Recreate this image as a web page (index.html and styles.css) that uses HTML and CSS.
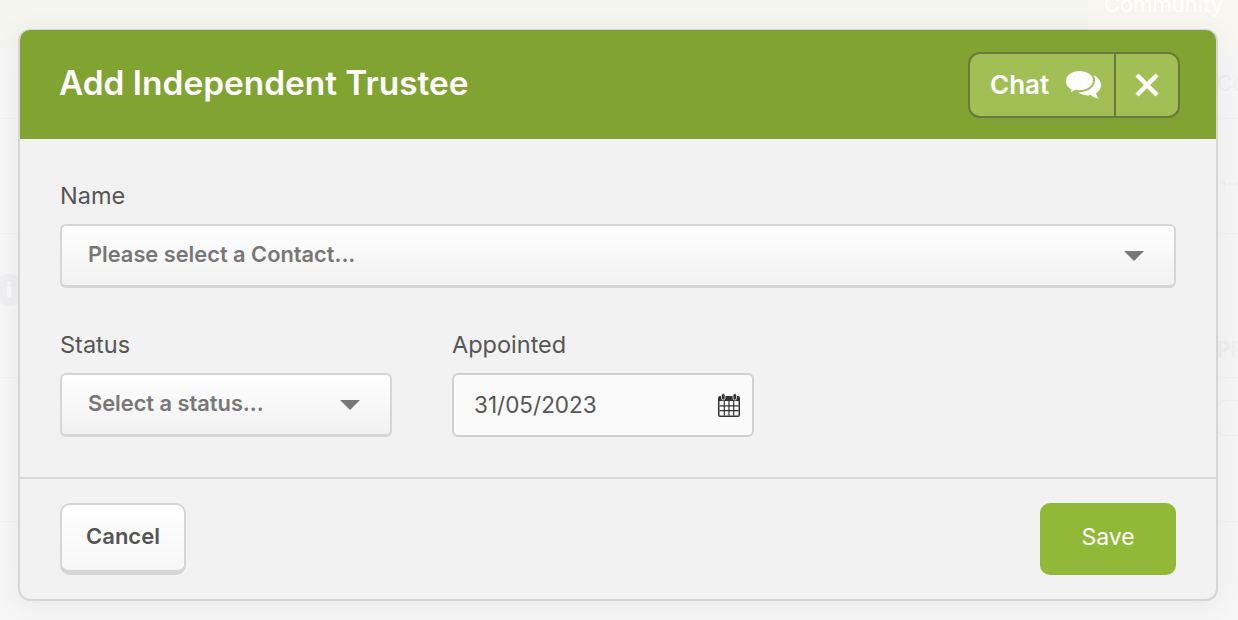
FILE: index.html
```html
<!DOCTYPE html>
<html lang="en">
<head>
<meta charset="utf-8">
<title>Add Independent Trustee</title>
<link rel="stylesheet" href="styles.css">
</head>
<body>
<div class="backdrop">
  <div class="topbar"><i class="ghost-circle"></i><span class="tab">Community</span></div>
  <div class="bgrow"></div>
  <div class="bgrow"></div>
  <div class="bgrow"></div>
  <div class="bgrow"></div>
  <span class="ghost ghost-co">Co</span>
  <span class="ghost ghost-dots">...</span>
  <span class="ghost ghost-pr">PR</span>
  <i class="ghost-box"></i>
  <span class="ghost-info">i</span>
</div>
<section class="modal">
  <header class="modal-head">
    <h1>Add Independent Trustee</h1>
    <div class="head-actions">
      <button class="chat" type="button">Chat
        <svg class="chat-icon" viewBox="0 0 36 29" width="36" height="29" aria-hidden="true">
          <path fill="#fff" d="M24 5h4c4.500 1.500 8 5.500 8 10 0 3.500-2 6.500-5 8.300.4 1.800 1.300 3.700 2.700 5.400-3.300-.5-6-1.800-8-3.600-1 .2-2 .3-3 .3-4 0-7.500-1.400-10-3.600z"/>
          <path fill="#fff" stroke="#a1bf54" stroke-width="2" d="M14.500 0C6.500 0 0 5 0 11.200c0 3.600 2.200 6.800 5.500 8.800-.4 1.500-1.300 3-2.500 4 2.900-.3 5.600-1.500 7.600-3.200 1.300.3 2.600.4 3.900.4 8 0 14.500-4.900 14.500-10.900S22.500 0 14.500 0z"/>
        </svg>
      </button>
      <button class="close" type="button" aria-label="Close">
        <svg viewBox="0 0 24 24" width="24" height="24" aria-hidden="true"><path d="M2 2 22 22M22 2 2 22" stroke="#fff" stroke-width="4.500" fill="none"/></svg>
      </button>
    </div>
  </header>
  <div class="modal-body">
    <div class="field">
      <label class="label">Name</label>
      <div class="select select-full"><span>Please select a Contact...</span><i class="caret"></i></div>
    </div>
    <div class="field-row">
      <div class="field">
        <label class="label">Status</label>
        <div class="select select-status"><span>Select a status...</span><i class="caret"></i></div>
      </div>
      <div class="field">
        <label class="label">Appointed</label>
        <div class="date">
          <span>31/05/2023</span>
          <svg viewBox="0 0 22 24" width="22" height="24" aria-hidden="true">
            <rect x="0" y="3" width="22" height="21" rx="2" fill="#333"/>
            <rect x="1.500" y="8" width="19" height="14.500" fill="#fafafa"/>
            <path d="M1.500 12.800H20.500M1.500 17.600H20.500M6.300 8V22.500M11 8V22.500M15.700 8V22.500" stroke="#333" stroke-width="1.200" fill="none"/>
            <rect x="3.500" y=".5" width="3.500" height="6.500" rx="1.700" fill="#333" stroke="#fafafa" stroke-width=".8"/>
            <rect x="15" y=".5" width="3.500" height="6.500" rx="1.700" fill="#333" stroke="#fafafa" stroke-width=".8"/>
          </svg>
        </div>
      </div>
    </div>
  </div>
  <footer class="modal-foot">
    <button class="btn-cancel" type="button">Cancel</button>
    <button class="btn-save" type="button">Save</button>
  </footer>
</section>
</body>
</html>
```
FILE: styles.css
```css
* { box-sizing: border-box; }
html, body { margin: 0; height: 100%; }
body {
  width: 1238px;
  height: 620px;
  overflow: hidden;
  position: relative;
  background: #f6f6f6;
  font-family: "Inter", "Liberation Sans", sans-serif;
  color: #555;
}
.backdrop { position: absolute; inset: 0; overflow: hidden; }
.topbar {
  height: 47px;
  background: #f3f5ee;
  position: relative;
}
.ghost-circle {
  position: absolute;
  left: -12px;
  top: -16px;
  width: 34px;
  height: 34px;
  border: 1px solid #f6f7f2;
  border-radius: 50%;
}
.tab {
  position: absolute;
  left: 1088px;
  top: 0;
  bottom: 0;
  width: 150px;
  background: #f8f6f1;
  color: #fff;
  font-size: 22px;
  padding: 0 16px;
  line-height: 8px;
  white-space: nowrap;
  overflow: hidden;
}
.bgrow { border-bottom: 1px solid #f2f2f2; }
.bgrow:nth-child(2) { height: 72px; }
.bgrow:nth-child(3) { height: 115px; }
.bgrow:nth-child(4) { height: 144px; }
.bgrow:nth-child(5) { height: 144px; }
.ghost { position: absolute; left: 1217px; color: #efefef; font-size: 21px; white-space: nowrap; }
.ghost-co { top: 71px; }
.ghost-dots { top: 165px; left: 1221px; }
.ghost-pr { top: 337px; font-weight: 700; }
.ghost-box {
  position: absolute;
  left: 1217px;
  top: 400px;
  width: 40px;
  height: 36px;
  border: 1px solid #f0f0f0;
  border-radius: 8px;
}
.ghost-info {
  position: absolute;
  left: -7px;
  top: 274px;
  width: 32px;
  height: 32px;
  border-radius: 50%;
  background: #f0f0f2;
  color: #fafafa;
  font-weight: 900;
  font-size: 20px;
  line-height: 32px;
  text-align: center;
}
.modal {
  position: absolute;
  left: 18px;
  top: 29px;
  width: 1200px;
  height: 572px;
  background: #f2f2f2;
  border: 2px solid #d6d6d6;
  border-top-width: 1px;
  border-radius: 12px;
  box-shadow: 0 4px 30px rgba(0, 0, 0, .06);
  display: flex;
  flex-direction: column;
}
.modal-head {
  height: 109px;
  flex: none;
  background: #80a331;
  border-radius: 10px 10px 0 0;
  display: flex;
  align-items: center;
  justify-content: space-between;
  padding: 1px 36px 0 40px;
}
h1 {
  margin: 0 0 5px -1px;
  color: #fff;
  font-size: 33.400px;
  line-height: 40px;
  font-weight: 600;
}
.head-actions {
  display: flex;
  height: 66px;
  border: 2px solid #6b7a3c;
  border-radius: 12px;
  background: #a1bf54;
  overflow: hidden;
}
.head-actions button {
  border: 0;
  background: none;
  color: #fff;
  display: flex;
  align-items: center;
  font-family: inherit;
  padding: 0;
}
.chat {
  width: 144px;
  padding-left: 20px !important;
  padding-bottom: 2px !important;
  font-size: 26px;
  font-weight: 600;
  gap: 16px;
}
.close {
  width: 64px;
  justify-content: center;
  border-left: 2px solid #6b7a3c !important;
}
.modal-body {
  flex: 1;
  padding: 41px 40px 0;
  display: flex;
  flex-direction: column;
  gap: 41px;
  border-bottom: 2px solid #d8d8d8;
}
.field { display: flex; flex-direction: column; }
.field-row { display: flex; gap: 60px; }
.label {
  font-size: 23.500px;
  line-height: 32px;
  margin-bottom: 12px;
  color: #555;
}
.select {
  height: 64px;
  border: 2px solid #d6d6d6;
  border-bottom-width: 3px;
  border-radius: 6px;
  background: linear-gradient(#fff, #f1f1f1);
  display: flex;
  align-items: center;
  justify-content: space-between;
  padding: 0 30px 4px 26px;
  font-size: 21.800px;
  font-weight: 600;
  color: #777;
}
.select-full { width: 1116px; }
.select-status { width: 332px; }
.caret {
  width: 0;
  height: 0;
  border-left: 10px solid transparent;
  border-right: 10px solid transparent;
  border-top: 10px solid #777;
  margin-top: 4px;
}
.date {
  width: 302px;
  height: 64px;
  border: 2px solid #d0d0d0;
  border-radius: 6px;
  background: #fafafa;
  display: flex;
  align-items: center;
  justify-content: space-between;
  padding: 0 12px 0 20px;
  font-size: 22.500px;
  color: #555;
}
.date span { margin-bottom: 2px; }
.modal-foot {
  height: 120px;
  flex: none;
  display: flex;
  justify-content: space-between;
  align-items: flex-start;
  padding: 24px 40px 0;
}
.modal-foot button { font-family: inherit; font-size: 22px; padding: 0 0 4px; }
.modal-foot .btn-save { font-size: 23px; padding-bottom: 4px; }
.btn-cancel {
  width: 126px;
  height: 72px;
  border: 2px solid #d6d6d6;
  border-bottom-width: 5px;
  border-radius: 10px;
  background: linear-gradient(#fff, #f7f7f7);
  color: #555;
  font-weight: 600;
}
.btn-save {
  width: 136px;
  height: 72px;
  border: 0;
  border-radius: 10px;
  background: #92b838;
  color: #fff;
}
```
